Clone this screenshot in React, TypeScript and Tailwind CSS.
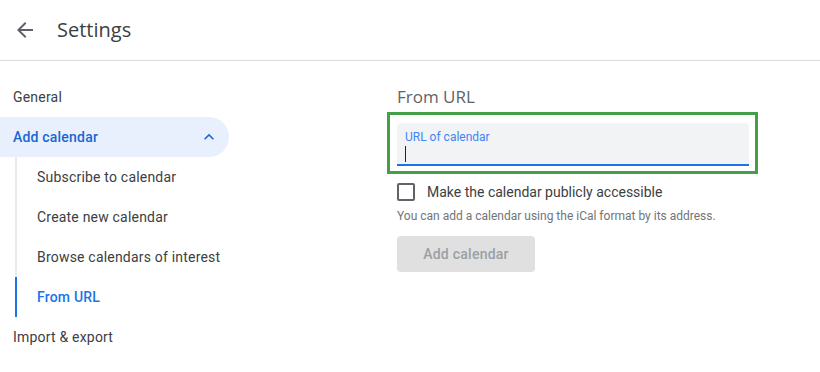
import React from "react";

const font = { fontFamily: "Roboto, 'Liberation Sans', Arial, sans-serif" };
const titleFont = { fontFamily: "'Open Sans', Roboto, sans-serif" };

type NavItem = { label: string; active?: boolean };

const subItems: NavItem[] = [
  { label: "Subscribe to calendar" },
  { label: "Create new calendar" },
  { label: "Browse calendars of interest" },
  { label: "From URL", active: true },
];

export default function App() {
  return (
    <div className="w-[820px] h-[372px] bg-white overflow-hidden text-[#3c4043]" style={font}>
      {/* ヘッダー */}
      <header className="flex items-center h-[61px] border-b border-[#dadce0]">
        <button className="flex items-center justify-center w-[24px] h-[24px] ml-[13px]">
          <svg width="24" height="24" viewBox="0 0 24 24" fill="#5f6368">
            <path d="M20 11H7.83l5.59-5.59L12 4l-8 8 8 8 1.41-1.41L7.83 13H20v-2z" />
          </svg>
        </button>
        <h1 className="ml-[20px] text-[20px] text-[#3c4043]" style={titleFont}>
          Settings
        </h1>
      </header>

      <div className="flex">
        {/* サイドバー */}
        <nav className="w-[384px] pt-[16px] text-[14px] tracking-[0.2px]">
          <div className="flex items-center h-[40px] pl-[13px]">General</div>
          <div className="flex items-center justify-between h-[40px] w-[229px] pl-[13px] pr-[10px] rounded-r-full bg-[#e8f0fe] text-[#1967d2] font-medium">
            <span>Add calendar</span>
            <svg width="20" height="20" viewBox="0 0 24 24" fill="#1967d2">
              <path d="M7.41 15.41L12 10.83l4.59 4.58L18 14l-6-6-6 6z" />
            </svg>
          </div>
          <ul className="ml-[15px] border-l-2 border-[#e8eaed]">
            {subItems.map((item) => (
              <li
                key={item.label}
                className={`flex items-center h-[40px] pl-[20px] ${
                  item.active ? "text-[#1a73e8] font-medium -ml-[2px] border-l-2 border-[#1a73e8]" : ""
                }`}
              >
                {item.label}
              </li>
            ))}
          </ul>
          <div className="flex items-center h-[40px] pl-[13px]">Import &amp; export</div>
        </nav>

        {/* メイン */}
        <main className="flex-1 pt-[24px] pl-[3px]">
          <h2 className="ml-[10px] text-[17px] leading-[24px] text-[#5f6368]" style={titleFont}>
            From URL
          </h2>
          <div className="mt-[3px] w-[371px] h-[62px] border-[3px] border-[#43a047] pt-[8px] pl-[7px]">
            <div className="w-[352px] h-[43px] bg-[#f1f3f4] rounded-t-[4px] border-b-2 border-[#1a73e8] pl-[8px] pt-[6px]">
              <div className="text-[12px] leading-[16px] text-[#4285f4]">URL of calendar</div>
              <div className="mt-[1px] w-[1px] h-[16px] bg-[#202124]" />
            </div>
          </div>
          <label className="flex items-center h-[20px] mt-[8px] ml-[10px]">
            <span className="w-[18px] h-[18px] border-2 border-[#5f6368] rounded-[2px]" />
            <span className="ml-[12px] text-[14px]">Make the calendar publicly accessible</span>
          </label>
          <p className="ml-[10px] mt-[6px] text-[12px] leading-[16px] text-[#70757a]">
            You can add a calendar using the iCal format by its address.
          </p>
          <button className="ml-[10px] mt-[12px] w-[138px] h-[36px] rounded-[4px] bg-[#e0e0e0] text-[14px] font-medium text-[#9aa0a6] tracking-[0.25px]">
            Add calendar
          </button>
        </main>
      </div>
    </div>
  );
}
